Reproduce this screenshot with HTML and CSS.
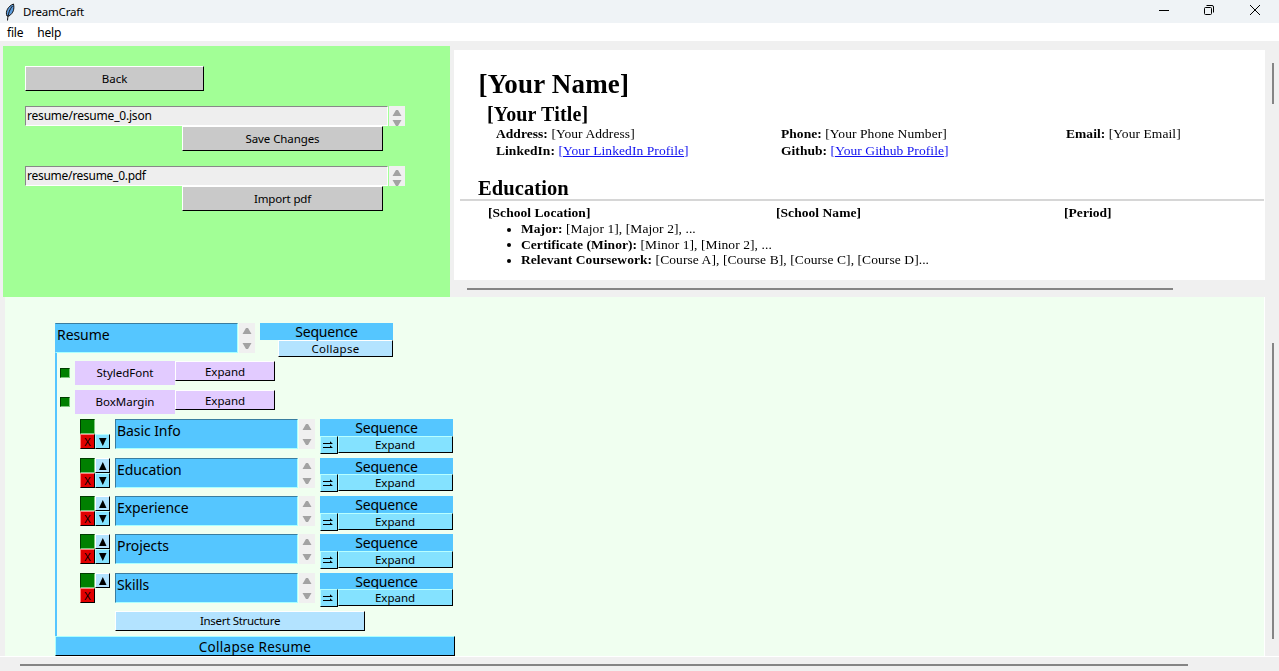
FILE: index.html
```html
<!DOCTYPE html>
<html lang="en">
<head>
<meta charset="utf-8">
<title>DreamCraft</title>
<link rel="stylesheet" href="styles.css">
</head>
<body>
<svg width="0" height="0" class="defs">
  <symbol id="spin" viewBox="0 0 16 30"><path d="M3.5 11h9L9 5H7zM3.5 20h9L9 26H7z" fill="#a3a3a3"/></symbol>
  <symbol id="spin-small" viewBox="0 0 16 20"><path d="M3.5 10h9L9 4H7zM3.5 14h9L9 20H7z" fill="#a3a3a3"/></symbol>
  <symbol id="up" viewBox="0 0 15 15"><path d="M4 12h7.5L7.8 4z" fill="#000"/></symbol>
  <symbol id="down" viewBox="0 0 15 15"><path d="M4 4h7.5L7.8 12z" fill="#000"/></symbol>
  <symbol id="arrows" viewBox="0 0 18 18"><path d="M3 7.5h9M3 11.5h9" stroke="#000" fill="none"/><path d="M10 5.3L13 8h-3zM10 9.3L13 12h-3z" fill="#000"/></symbol>
</svg>
<div class="window">
  <header class="titlebar">
    <svg class="feather" width="12" height="18" viewBox="0 0 12 18"><path d="M3 13C1 9 4 3 9.5 1c1 5 0 9-4.500 12z" fill="#5b9bdc" stroke="#111" stroke-width="1"/><path d="M8.500 3C6 6 4 10 3.500 17.500" stroke="#111" fill="none"/></svg>
    <span class="t-title">DreamCraft</span>
    <div class="controls">
      <svg width="12" height="12" viewBox="0 0 12 12"><path d="M1 6.5h10" stroke="#000"/></svg>
      <svg width="12" height="12" viewBox="0 0 12 12"><rect x="1.5" y="3.5" width="7" height="7" rx="1" fill="none" stroke="#000"/><path d="M3.5 1.5H9a1.5 1.5 0 0 1 1.5 1.5v5.5" fill="none" stroke="#000"/></svg>
      <svg width="12" height="12" viewBox="0 0 12 12"><path d="M1 1l10 10M11 1L1 11" stroke="#000"/></svg>
    </div>
  </header>
  <nav class="menubar"><span>file</span><span class="t-help">help</span></nav>
  <div class="upper">
    <section class="panel">
      <div class="btn gray back"><span>Back</span></div>
      <div class="file">
        <div class="entry"><span class="t-json">resume/resume_0.json</span></div>
        <svg class="spin" width="16" height="20"><use href="#spin-small"/></svg>
      </div>
      <div class="btn gray act"><span class="t-save">Save Changes</span></div>
      <div class="file second">
        <div class="entry"><span class="t-pdf">resume/resume_0.pdf</span></div>
        <svg class="spin" width="16" height="20"><use href="#spin-small"/></svg>
      </div>
      <div class="btn gray act"><span class="t-import">Import pdf</span></div>
    </section>
    <section class="preview">
      <article class="page">
        <h1><span>[Your Name]</span></h1>
        <h2><span>[Your Title]</span></h2>
        <div class="contact">
          <p><b>Address:</b> [Your Address]</p><p><b>Phone:</b> [Your Phone Number]</p><p><b>Email:</b> [Your Email]</p>
          <p><b>LinkedIn:</b> <a>[Your LinkedIn Profile]</a></p><p><b>Github:</b> <a>[Your Github Profile]</a></p>
        </div>
        <h3><span>Education</span></h3>
        <div class="school"><b>[School Location]</b><b>[School Name]</b><b>[Period]</b></div>
        <ul>
          <li><span><b>Major:</b> [Major 1], [Major 2], ...</span></li>
          <li><span><b>Certificate (Minor):</b> [Minor 1], [Minor 2], ...</span></li>
          <li><span><b>Relevant Coursework:</b> [Course A], [Course B], [Course C], [Course D]...</span></li>
        </ul>
      </article>
      <div class="hbar top"></div>
    </section>
    <div class="vtrack"><div class="vbar first"></div></div>
  </div>
  <div class="lower">
    <section class="tree">
      <div class="node">
        <div class="row root">
          <div class="field"><span>Resume</span></div>
          <svg class="spin" width="16" height="30"><use href="#spin"/></svg>
          <div class="kind"><div class="seq"><span>Sequence</span></div><div class="btn pale collapse"><span>Collapse</span></div></div>
        </div>
        <div class="prop"><i class="check"></i><div class="name"><span>StyledFont</span></div><div class="btn lilac"><span>Expand</span></div></div>
        <div class="prop"><i class="check"></i><div class="name"><span>BoxMargin</span></div><div class="btn lilac"><span>Expand</span></div></div>
        <div class="row child tall">
          <div class="tools"><i class="sq green"></i><i></i><i class="sq red">X</i><i class="sq dn"><svg width="15" height="15"><use href="#down"/></svg></i></div>
          <div class="field"><span>Basic Info</span></div>
          <svg class="spin" width="16" height="30"><use href="#spin"/></svg>
          <div class="kind"><div class="seq"><span>Sequence</span></div><div class="ops"><div class="btn cyan move"><svg width="18" height="18"><use href="#arrows"/></svg></div><div class="btn cyan exp"><span>Expand</span></div></div></div>
        </div>
        <div class="row child tight">
          <div class="tools"><i class="sq green"></i><i class="sq up"><svg width="15" height="15"><use href="#up"/></svg></i><i class="sq red">X</i><i class="sq dn"><svg width="15" height="15"><use href="#down"/></svg></i></div>
          <div class="field"><span>Education</span></div>
          <svg class="spin" width="16" height="30"><use href="#spin"/></svg>
          <div class="kind"><div class="seq"><span>Sequence</span></div><div class="ops"><div class="btn cyan move"><svg width="18" height="18"><use href="#arrows"/></svg></div><div class="btn cyan exp"><span>Expand</span></div></div></div>
        </div>
        <div class="row child">
          <div class="tools"><i class="sq green"></i><i class="sq up"><svg width="15" height="15"><use href="#up"/></svg></i><i class="sq red">X</i><i class="sq dn"><svg width="15" height="15"><use href="#down"/></svg></i></div>
          <div class="field"><span>Experience</span></div>
          <svg class="spin" width="16" height="30"><use href="#spin"/></svg>
          <div class="kind"><div class="seq"><span>Sequence</span></div><div class="ops"><div class="btn cyan move"><svg width="18" height="18"><use href="#arrows"/></svg></div><div class="btn cyan exp"><span>Expand</span></div></div></div>
        </div>
        <div class="row child tall">
          <div class="tools"><i class="sq green"></i><i class="sq up"><svg width="15" height="15"><use href="#up"/></svg></i><i class="sq red">X</i><i class="sq dn"><svg width="15" height="15"><use href="#down"/></svg></i></div>
          <div class="field"><span>Projects</span></div>
          <svg class="spin" width="16" height="30"><use href="#spin"/></svg>
          <div class="kind"><div class="seq"><span>Sequence</span></div><div class="ops"><div class="btn cyan move"><svg width="18" height="18"><use href="#arrows"/></svg></div><div class="btn cyan exp"><span>Expand</span></div></div></div>
        </div>
        <div class="row child tight">
          <div class="tools"><i class="sq green"></i><i class="sq up"><svg width="15" height="15"><use href="#up"/></svg></i><i class="sq red">X</i><i></i></div>
          <div class="field"><span>Skills</span></div>
          <svg class="spin" width="16" height="30"><use href="#spin"/></svg>
          <div class="kind"><div class="seq"><span>Sequence</span></div><div class="ops"><div class="btn cyan move"><svg width="18" height="18"><use href="#arrows"/></svg></div><div class="btn cyan exp"><span>Expand</span></div></div></div>
        </div>
        <div class="btn pale insert"><span>Insert Structure</span></div>
      </div>
      <div class="btn blue fold"><span>Collapse Resume</span></div>
    </section>
    <div class="vtrack"><div class="vbar second"></div></div>
  </div>
  <footer class="htrack"><div class="hbar bottom"></div></footer>
</div>
</body>
</html>
```
FILE: styles.css
```css
* { box-sizing: border-box; }
body { margin: 0; font: 12px "Noto Sans", sans-serif; color: #000; }
.defs { display: none; }
svg { display: block; flex: none; }
i { font-style: normal; }
span { white-space: nowrap; }
.window { width: 1279px; height: 671px; overflow: hidden; background: #f0f0f0; display: flex; flex-direction: column; }

.titlebar { height: 23px; background: #eff3f6; display: flex; align-items: center; padding-left: 4px; }
.feather { margin-right: 7px; }
.t-title { font-size: 11.5px; letter-spacing: -0.2px; }
.controls { margin-left: auto; display: flex; gap: 33.5px; padding: 0 18px 3px 0; }
.controls svg:nth-child(2) { margin: 0 0.5px 0 -0.5px; }
.menubar { height: 18px; background: #fff; display: flex; gap: 14px; padding-left: 7px; line-height: 20px; font-size: 12px; letter-spacing: -0.2px; }

.upper { display: flex; height: 256px; }
.panel { width: 447px; margin: 5px 0 0 3px; background: #a2ff96; padding: 20px 0 0 22px; }
.btn { display: flex; align-items: center; justify-content: center; border: 1px solid #fff; border-right-color: #000; border-bottom-color: #000; line-height: 14px; font-size: 11.5px; }
.gray { background: #c9c9c9; }
.back { width: 179px; height: 25px; }
.act { width: 201px; height: 25px; margin-left: 157px; }
.t-save { letter-spacing: -0.1px; }
.t-import { letter-spacing: -0.15px; }
.file { display: flex; margin-top: 15px; height: 20px; }
.entry { width: 363px; background: #eee; border: 1px solid #888; border-right: 1px solid #fff; border-bottom: 1px solid #fff; padding-left: 1px; line-height: 18px; font-size: 12px; letter-spacing: -0.2px; }
.t-pdf { letter-spacing: -0.28px; }
.spin { background: #f0f0f0; }
.file .spin { margin-left: 1px; }

.preview { width: 811px; margin: 9px 0 0 4px; }
.page { height: 230px; background: #fff; padding: 18px 0 0 24px; font-family: "Liberation Serif", serif; font-size: 13.5px; letter-spacing: 0.08px; overflow: hidden; border-right: 1px solid #fff; }
.page > * { filter: blur(0.3px); }
.page b { letter-spacing: 0.05px; }
.page h1, .page h2, .page h3, .page p, .page ul { margin: 0; padding: 0; }
.page h1 { font-size: 27px; letter-spacing: 0.18px; line-height: 32px; height: 35px; padding-left: 0.5px; }
.page h2 { font-size: 20px; letter-spacing: 0.15px; line-height: 22px; height: 22px; padding-left: 9px; }
.contact { display: grid; grid-template-columns: 285px 285px auto; grid-auto-rows: 16.5px; padding-left: 18px; line-height: 17px; white-space: nowrap; }
.contact a { color: #1010f0; text-decoration: underline; }
.page h3 { font-size: 20.5px; line-height: 26px; margin: 17px 0 0 -18px; padding-left: 18px; height: 26px; border-bottom: 2px solid #d6d6d6; }
.school { display: grid; grid-template-columns: 288px 288px auto; padding: 3px 0 0 10px; line-height: 17px; }
.page ul { list-style: none; }
.page li { height: 15.6px; line-height: 15.6px; padding-left: 29px; display: flex; align-items: center; }
.page li::before { content: ""; width: 4px; height: 4px; border-radius: 2px; background: #000; margin: 2px 10px 0 0; }
.hbar { height: 2px; background: #858585; }
.hbar.top { width: 706px; margin: 8px 0 0 13px; }
.vtrack { width: 14px; padding-left: 7px; }
.vbar { width: 2px; background: #858585; }
.vbar.first { height: 41px; margin-top: 22px; }

.lower { display: flex; height: 359px; margin-left: 5px; }
.tree { width: 1260px; background: #f0fff0; border-right: 1px solid #fff; padding: 26px 0 0 50px; }
.vbar.second { height: 296px; margin-top: 46px; }
.htrack { border-top: 1px solid #fff; padding: 7px 0 0 20px; }
.hbar.bottom { width: 1168px; }

.node { height: 313px; border-left: 2px solid #55c6ff; }
.row { display: flex; height: 38px; align-items: flex-start; }
.root { margin-left: -2px; }
.child { padding-left: 23px; }
.tall { height: 39px; }
.field { width: 183px; height: 30px; background: #55c6ff; border-top: 1px solid #397da0; border-left: 1px solid #397da0; border-bottom: 1px solid #aff; border-right: 1px solid #aff; padding-left: 1px; line-height: 22px; font-size: 14px; letter-spacing: -0.08px; }
.root .field { border-left-color: #55c6ff; }
.row .spin { margin: 0 5px 0 1px; }
.kind { width: 133px; }
.seq { height: 17px; background: #55c6ff; text-align: center; line-height: 18px; font-size: 14px; letter-spacing: -0.2px; }
.ops { display: flex; align-items: flex-start; }
.collapse { width: 115px; height: 17px; margin-left: 18px; letter-spacing: 0.3px; }
.pale { background: #b3e3ff; }
.cyan { background: #84e2ff; border-color: #b8ffff #000 #000 #b8ffff; }
.blue { background: #55c6ff; border-color: #aff #000 #000 #aff; }
.lilac { background: #e2cbff; width: 100px; height: 20px; padding-top: 1px; }
.move { width: 18px; height: 18px; }
.exp { width: 115px; height: 17px; border-left-color: #b8ffff; padding-right: 1px; }
.tight .seq { height: 16px; }
.prop { display: flex; height: 29px; padding-left: 3px; }
.check { width: 10px; height: 10px; margin: 7px 5px 0 0; background: #008000; border: 1px solid #003c00; border-right-color: #7fc97f; border-bottom-color: #7fc97f; }
.name { width: 100px; height: 24px; background: #e2cbff; text-align: center; line-height: 24px; font-size: 11.5px; }
.tools { display: grid; grid-template-columns: 15px 15px; grid-auto-rows: 15px; margin-right: 5px; }
.sq { border: 1px solid #fff; border-right-color: #000; border-bottom-color: #000; display: flex; align-items: center; justify-content: center; font-size: 11px; line-height: 12px; }
.green { background: #008000; border: 1px solid #003c00; border-right-color: #7fc97f; border-bottom-color: #7fc97f; }
.red { background: #e10000; border-color: #ff8080 #000 #000 #ff8080; }
.dn { background: #84e2ff; border-color: #b8ffff #000 #000 #b8ffff; }
.up { background: #b3e3ff; }
.insert { width: 250px; height: 20px; margin-left: 58px; letter-spacing: -0.3px; }
.fold { width: 400px; height: 20px; font-size: 13.5px; letter-spacing: 0.28px; padding-top: 2px; }
```
